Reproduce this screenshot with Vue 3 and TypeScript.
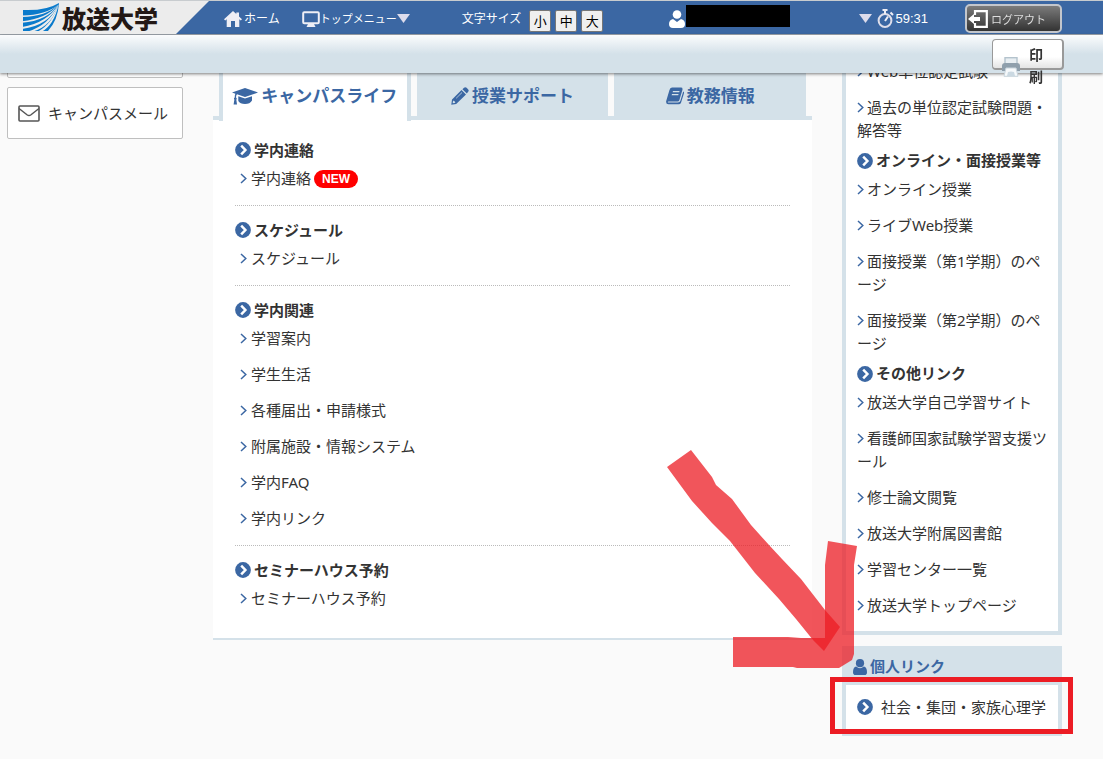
<script setup lang="ts">
interface Section {
  title: string
  items: { label: string; isNew?: boolean }[]
}

const toItems = (labels: string[]) => labels.map((label) => ({ label }))

const campusSections: Section[] = [
  { title: '学内連絡', items: [{ label: '学内連絡', isNew: true }] },
  { title: 'スケジュール', items: toItems(['スケジュール']) },
  {
    title: '学内関連',
    items: toItems(['学習案内', '学生生活', '各種届出・申請様式', '附属施設・情報システム', '学内FAQ', '学内リンク']),
  },
  { title: 'セミナーハウス予約', items: toItems(['セミナーハウス予約']) },
]

const linkSections: Section[] = [
  { title: '', items: toItems(['Web単位認定試験', '過去の単位認定試験問題・解答等']) },
  {
    title: 'オンライン・面接授業等',
    items: toItems(['オンライン授業', 'ライブWeb授業', '面接授業（第1学期）のページ', '面接授業（第2学期）のページ']),
  },
  {
    title: 'その他リンク',
    items: toItems([
      '放送大学自己学習サイト',
      '看護師国家試験学習支援ツール',
      '修士論文閲覧',
      '放送大学附属図書館',
      '学習センター一覧',
      '放送大学トップページ',
    ]),
  },
]

const fontSizes: string[] = ['小', '中', '大']
</script>

<template>
  <div class="page">
    <header class="header">
      <div class="topbar">
        <a class="brand" href="#">
          <svg class="brand-mark" viewBox="0 0 38 29" aria-hidden="true">
            <path d="M1 7 Q24 8 37 0 Q36 17 26 28 L1 28 Z" fill="#0a7acb" />
            <g fill="#ececec">
              <path d="M0 12.5 Q24 12 36.5 1.5 Q24 13.5 0 14 Z" />
              <path d="M0 18.2 Q24 16 36.5 1.5 Q25 18 0 19.8 Z" />
              <path d="M0 24 Q25 20 36.5 1.5 Q27 22.5 0 26 Z" />
              <path d="M6 28.5 Q27 22 36.5 1.5 Q30 23 11 28.5 Z" />
              <path d="M16 28.5 Q30 21 36.5 1.5 Q32 22 20 28.5 Z" />
            </g>
          </svg>
          <span>放送大学</span>
        </a>
        <nav class="nav">
          <a class="nav-link" href="#">
            <svg class="ico-home" viewBox="0 0 18 16" aria-hidden="true">
              <path d="M9 0 L12.3 3 V1.5 H15 V5.4 L18 8.3 L16.8 9.4 L15.3 8.2 V16 H11 V10 H7 V16 H2.7 V8.2 L1.2 9.4 L0 8.3 Z" fill="#eeeef5" />
            </svg>
            <span>ホーム</span>
          </a>
          <a class="nav-link menu" href="#">
            <svg class="ico-screen" viewBox="0 0 18 16" aria-hidden="true">
              <rect x="1.2" y="1.2" width="15.6" height="11" rx="1" fill="none" stroke="#eeeef5" stroke-width="2" />
              <path d="M6 13 H12 L13.5 16 H4.5 Z" fill="#eeeef5" />
            </svg>
            <span class="compact">トップメニュー</span>
            <svg class="ico-down" viewBox="0 0 13 9" aria-hidden="true"><path d="M0 0 H13 L6.5 9 Z" fill="#dcdcec" /></svg>
          </a>
        </nav>
        <div class="sizes">
          <span class="sizes-label">文字サイズ</span>
          <button v-for="size in fontSizes" :key="size" type="button" class="size-btn">{{ size }}</button>
        </div>
        <div class="account">
          <svg class="ico-person" viewBox="0 0 16 18" aria-hidden="true">
            <circle cx="8" cy="4.5" r="4.3" fill="#fff" />
            <path d="M4 9 L8 12 L12 9 Q16 10 16 14 Q16 18 12 18 H4 Q0 18 0 14 Q0 10 4 9 Z" fill="#fff" />
          </svg>
          <span class="user-name"></span>
          <svg class="ico-down" viewBox="0 0 13 9" aria-hidden="true"><path d="M0 0 H13 L6.5 9 Z" fill="#dcdcec" /></svg>
          <svg class="ico-timer" viewBox="0 0 17 19" aria-hidden="true">
            <circle cx="8" cy="11.5" r="6.4" fill="none" stroke="#dedeea" stroke-width="2" />
            <path d="M5.5 1 H10.5 M8 1 V5 M13.5 3.5 L16 6 M8 12 L11 7.5" fill="none" stroke="#eeeef5" stroke-width="2" />
          </svg>
          <span class="time">59:31</span>
          <button type="button" class="logout">
            <svg class="ico-exit" viewBox="0 0 20 18" aria-hidden="true">
              <path d="M7 5 V1.2 H18.8 V16.8 H7 V13" fill="none" stroke="#fff" stroke-width="2.2" />
              <path d="M0 9 L6 4 V7 H12 V11 H6 V14 Z" fill="#fff" />
            </svg>
            <span>ログアウト</span>
          </button>
        </div>
      </div>
      <div class="subbar">
        <button type="button" class="print">
          <svg class="ico-print" viewBox="0 0 20 20" aria-hidden="true">
            <rect x="4" y="0.7" width="12" height="7" fill="#e8eef2" stroke="#b4c3cd" stroke-width="1.4" />
            <path d="M4 6 H16 Q19 6 19 9 V14 H1 V9 Q1 6 4 6 Z" fill="#8f9fac" />
            <path d="M5 11 H15 L17 19.3 H3 Z" fill="#f6f9fb" stroke="#c9d5dd" />
            <path d="M7 15 Q10 14 13 15 L14 19 H6 Z" fill="#cbd9e2" />
          </svg>
          <span class="print-label">印刷</span>
        </button>
      </div>
    </header>

    <div class="columns">
      <aside class="side">
        <div class="card"></div>
        <a class="card" href="#">
          <svg class="ico-mail" viewBox="0 0 22 17" aria-hidden="true">
            <rect x="1" y="1" width="20" height="15" rx="1" fill="none" stroke="#555" stroke-width="1.6" />
            <path d="M1 3.5 L9.3 10 Q11 11.2 12.7 10 L21 3.5" fill="none" stroke="#555" stroke-width="1.5" />
          </svg>
          <span>キャンパスメール</span>
        </a>
      </aside>

      <main class="main">
        <div class="tabs" role="tablist">
          <button type="button" class="tab active" role="tab" aria-selected="true">
            <svg class="ico-cap" viewBox="0 0 26 17" aria-hidden="true">
              <path d="M13 0 L26 4.5 L13 9 L5 6.3 Q4 7 4 9.5 Q5.3 10.5 4.3 11.6 L5 16.6 H1.6 L2.4 11.6 Q1.4 10.5 2.7 9.5 Q2.7 7 3.4 5.7 L0 4.5 Z" />
              <path d="M6.3 8.3 L13 10.6 L20 8.3 V12.5 Q18 16 13 16 Q8 16 6.3 13 Z" />
            </svg>
            <span>キャンパスライフ</span>
          </button>
          <button type="button" class="tab" role="tab" aria-selected="false">
            <svg class="ico-tab" viewBox="0 0 18 18" aria-hidden="true">
              <path fill-rule="evenodd" d="M10.5 3 L15 7.5 L5.2 17 L0.3 17.7 L1 12.6 Z M1.9 14.4 L1.7 16.3 L3.6 16 L4.4 15.2 L2.7 13.5 Z M10.8 5.3 L4.9 11.2 L5.3 11.6 L11.2 5.7 Z" />
              <path d="M11.4 2.2 L13 0.8 Q14.3 -0.3 15.6 0.8 L17.2 2.4 Q18.2 3.6 17.2 4.8 L15.8 6.4 Z" />
            </svg>
            <span>授業サポート</span>
          </button>
          <button type="button" class="tab" role="tab" aria-selected="false">
            <svg class="ico-tab" viewBox="0 0 18 18" aria-hidden="true">
              <path fill-rule="evenodd" d="M6 0.6 H15 Q17 0.6 16.4 3 L13.4 13 Q13 14.5 11.5 14.5 H2.5 Q1.5 14.7 2 15.5 H12 Q13.8 15.5 14.4 13.8 L17.2 4.5 Q18.4 5 18 6.3 L15 15.7 Q14.4 17.3 12.6 17.3 H2.5 Q-0.4 17 0.2 14 L3.4 3.3 Q4 0.6 6 0.6 Z M7 4 L6.6 5.2 H13.2 L13.6 4 Z M6 7 L5.6 8.2 H12.2 L12.6 7 Z" />
            </svg>
            <span>教務情報</span>
          </button>
        </div>
        <div class="panel">
          <section v-for="section in campusSections" :key="section.title" class="section">
            <h2 class="heading">
              <svg class="ico-circle" viewBox="0 0 16 16" aria-hidden="true">
                <circle cx="8" cy="8" r="7.9" fill="#3b67a3" />
                <path d="M6.2 3.6 L10.4 8 L6.2 12.4" fill="none" stroke="#fff" stroke-width="2.5" />
              </svg>
              <span>{{ section.title }}</span>
            </h2>
            <ul class="list">
              <li v-for="item in section.items" :key="item.label" class="item">
                <svg class="ico-angle" viewBox="0 0 7 11" aria-hidden="true"><path d="M1 1 L5.8 5.5 L1 10" /></svg>
                <a href="#">{{ item.label }}</a>
                <span v-if="item.isNew" class="badge">NEW</span>
              </li>
            </ul>
          </section>
        </div>
      </main>

      <aside class="links">
        <div class="link-box">
          <section v-for="section in linkSections" :key="section.title">
            <h2 v-if="section.title" class="heading">
              <svg class="ico-circle" viewBox="0 0 16 16" aria-hidden="true">
                <circle cx="8" cy="8" r="7.9" fill="#3b67a3" />
                <path d="M6.2 3.6 L10.4 8 L6.2 12.4" fill="none" stroke="#fff" stroke-width="2.5" />
              </svg>
              <span>{{ section.title }}</span>
            </h2>
            <ul class="list">
              <li v-for="item in section.items" :key="item.label" class="link-item">
                <svg class="ico-angle" viewBox="0 0 7 11" aria-hidden="true"><path d="M1 1 L5.8 5.5 L1 10" /></svg>
                <a href="#">{{ item.label }}</a>
              </li>
            </ul>
          </section>
        </div>

        <section class="personal">
          <h2 class="personal-title">
            <svg class="ico-user" viewBox="0 0 14 16" aria-hidden="true">
              <circle cx="7" cy="4.2" r="4.1" fill="#3b67a3" />
              <path d="M3.2 7.6 Q7 10.8 10.8 7.6 Q14 8.3 14 13.2 Q14 16 11.5 16 H2.5 Q0 16 0 13.2 Q0 8.3 3.2 7.6 Z" fill="#3b67a3" />
            </svg>
            <span>個人リンク</span>
          </h2>
          <a class="personal-link" href="#">
            <svg class="ico-circle" viewBox="0 0 16 16" aria-hidden="true">
              <circle cx="8" cy="8" r="7.9" fill="#3b67a3" />
              <path d="M6.2 3.6 L10.4 8 L6.2 12.4" fill="none" stroke="#fff" stroke-width="2.5" />
            </svg>
            <span>社会・集団・家族心理学</span>
          </a>
          <div class="highlight"></div>
          <svg class="arrow" viewBox="0 0 192 220" aria-hidden="true">
            <g fill="#ec1c24" fill-opacity="0.75">
              <path d="M0 17 L24 0 L45 27 L49 35 L65 49 L84 75 L102 95 L115 109 L134 129 L158 160 L173 177 L157 201 L146 190 L129 169 L112 149 L88 123 L63 91 L45 73 L25 51 Z" />
              <path d="M161 91 L190 96 L187 115 V204 L185 210 L172 218 H130 L126 217 H66 V187 H121 L134 188 H158 V115 Z" />
            </g>
          </svg>
        </section>
      </aside>
    </div>
  </div>
</template>

<style>
body {
  background: #fafafa;
}
</style>

<style scoped>
.page {
  min-height: 100vh;
  color: #333;
  font-family: "Noto Sans", "Noto Sans CJK JP", sans-serif;
  font-size: 15px;
  line-height: 23px;
}
.page *,
.page *::before {
  box-sizing: border-box;
}
a {
  color: inherit;
  text-decoration: none;
}
button {
  font-family: inherit;
  padding: 0;
  margin: 0;
  cursor: pointer;
}
svg {
  display: block;
  flex: none;
}
.header {
  position: fixed;
  top: 0;
  left: 0;
  right: 0;
  z-index: 10;
}
.topbar {
  display: flex;
  align-items: center;
  height: 35px;
  padding-top: 2px;
  background: #3b67a3;
  border-top: 1px solid #c8cccf;
  border-bottom: 1px solid #a0a7ae;
  color: #fff;
  font-size: 12px;
  line-height: 18px;
}
.brand {
  display: flex;
  align-items: center;
  gap: 2px;
  width: 209px;
  height: 33px;
  margin-top: -2px;
  padding-left: 22px;
  background: #ececec;
  clip-path: polygon(0 0, 100% 0, 176px 100%, 0 100%);
  color: #231815;
  font-size: 24px;
  font-weight: 900;
  line-height: 30px;
}
.brand-mark {
  width: 38px;
  height: 29px;
}
.brand span {
  padding-top: 3px;
}
.nav {
  display: flex;
  gap: 22px;
  margin-left: 15px;
}
.nav-link {
  display: flex;
  align-items: center;
  gap: 2px;
}
.nav-link.menu {
  gap: 0;
}
.compact {
  font-size: 11px;
}
.ico-home,
.ico-screen {
  width: 18px;
  height: 16px;
}
.ico-down {
  width: 13px;
  height: 9px;
}
.sizes {
  display: flex;
  align-items: center;
  gap: 4px;
  margin-left: 52px;
}
.sizes-label {
  margin-right: 4px;
}
.size-btn {
  width: 22px;
  height: 22px;
  margin-top: 4px;
  border: 1px solid #767676;
  border-radius: 2px;
  background: #efefef;
  color: #000;
  font-size: 13px;
  line-height: 18px;
}
.account {
  display: flex;
  align-items: center;
  height: 29px;
  margin-left: auto;
  margin-right: 41px;
}
.ico-person {
  width: 16px;
  height: 18px;
}
.user-name {
  width: 104px;
  height: 22px;
  margin-left: 1px;
  margin-right: 69px;
  margin-bottom: 6px;
  background: #000;
}
.ico-timer {
  width: 17px;
  height: 19px;
  margin-left: 5px;
}
.time {
  margin-left: 1px;
  padding-top: 1px;
  font-family: "Liberation Sans", Arial, sans-serif;
  font-size: 13px;
}
.logout {
  display: flex;
  align-items: center;
  gap: 3px;
  width: 97px;
  height: 29px;
  margin-left: 37px;
  padding-left: 1px;
  border: 2px solid #c3c6cc;
  border-radius: 5px;
  background: linear-gradient(#7b7b7b, #333);
  color: #ddd;
  font-size: 11px;
}
.ico-exit {
  width: 20px;
  height: 18px;
}
.subbar {
  display: flex;
  justify-content: flex-end;
  height: 38px;
  padding: 4px 39px 0 0;
  background: linear-gradient(#fbfcfd, #d4e1e9 50%);
  box-shadow: 0 1px 3px rgba(0, 0, 0, 0.5);
}
.print {
  display: flex;
  align-items: flex-start;
  width: 72px;
  height: 31px;
  padding-left: 8px;
  border: 1px solid #999;
  border-width: 1px 2px 2px 1px;
  border-radius: 4px;
  background: linear-gradient(#fff 60%, #e4e4e4);
  color: #333;
  font-size: 14px;
  font-weight: 700;
  line-height: 22px;
}
.ico-print {
  width: 20px;
  height: 20px;
  margin-top: 17px;
}
.print-label {
  width: 14px;
  margin-left: 8px;
  margin-top: 4px;
}
.columns {
  display: grid;
  grid-template-columns: 176px minmax(0, 1fr) 220px;
  gap: 30px;
  align-items: start;
  padding: 0 41px 20px 7px;
}
.side {
  display: flex;
  flex-direction: column;
  gap: 9px;
  padding-top: 26px;
}
.card {
  display: flex;
  align-items: center;
  gap: 8px;
  height: 52px;
  padding-left: 10px;
  border: 1px solid #bfbfbf;
  border-radius: 2px;
  background: #fff;
}
.ico-mail {
  width: 22px;
  height: 17px;
}
.main {
  padding-top: 60px;
}
.tabs {
  display: grid;
  grid-template-columns: repeat(3, 1fr);
  gap: 6px;
  height: 60px;
  padding: 0 6px;
  border-bottom: 4px solid #d4e1e9;
}
.tab {
  display: flex;
  align-items: center;
  justify-content: center;
  gap: 3px;
  height: 56px;
  padding-top: 16px;
  border: 0;
  background: #d4e1e9;
  color: #3b67a3;
  fill: #3b67a3;
  font-size: 17px;
  font-weight: 700;
  line-height: 24px;
}
.tab.active {
  height: 61px;
  padding-bottom: 5px;
  border: solid #d4e1e9;
  border-width: 0 4px;
  background: #fff;
  position: relative;
}
.ico-cap {
  width: 26px;
  height: 17px;
}
.ico-tab {
  width: 18px;
  height: 18px;
}
.panel {
  padding: 6px 22px 13px;
  background: #fff;
  border-bottom: 2px solid #d4e1e9;
}
.section {
  padding: 13px 0 8px;
}
.section + .section {
  border-top: 1px dotted #bbb;
}
.heading {
  display: flex;
  align-items: center;
  gap: 3px;
  height: 22px;
  margin: 0;
  font-size: 15px;
  font-weight: 700;
}
.ico-circle {
  width: 16px;
  height: 16px;
}
.list {
  list-style: none;
  margin: 0;
  padding: 0;
}
.item {
  display: flex;
  align-items: center;
  height: 36px;
  padding: 0 0 1px 5px;
}
.ico-angle {
  width: 7px;
  height: 11px;
  fill: none;
  stroke: #3b67a3;
  stroke-width: 1.5;
}
.item .ico-angle {
  margin-right: 4px;
}
.badge {
  margin-left: 3px;
  padding: 0 8px;
  border-radius: 9px;
  background: #f00;
  color: #fff;
  font-family: "Liberation Sans", Arial, sans-serif;
  font-size: 12px;
  font-weight: 700;
  line-height: 18px;
}
.links {
  padding-top: 43px;
}
.link-box {
  padding: 10px 7px 8px 11px;
  border: 4px solid #d4e1e9;
  border-top: 0;
  background: #fff;
}
.link-box .heading {
  height: 23px;
  padding-top: 2px;
}
.link-item {
  padding: 7px 0 6px;
}
.link-item .ico-angle {
  display: inline-block;
  margin-right: 3px;
}
.personal {
  position: relative;
  margin-top: 11px;
  border: 4px solid #d4e1e9;
  border-top: 0;
  background: #fff;
}
.personal-title {
  display: flex;
  align-items: center;
  gap: 3px;
  height: 39px;
  margin: 0;
  padding: 2px 0 0 7px;
  background: #d4e1e9;
  color: #3b67a3;
  font-size: 15px;
  font-weight: 700;
}
.ico-user {
  width: 14px;
  height: 16px;
}
.personal-link {
  display: flex;
  align-items: center;
  gap: 8px;
  height: 47px;
  padding: 0 0 3px 11px;
}
.highlight {
  position: absolute;
  top: 31px;
  left: -16px;
  width: 243px;
  height: 57px;
  border: 5px solid #ec1c24;
  pointer-events: none;
}
.arrow {
  position: absolute;
  top: -196px;
  left: -179px;
  width: 192px;
  height: 220px;
  pointer-events: none;
}
</style>
